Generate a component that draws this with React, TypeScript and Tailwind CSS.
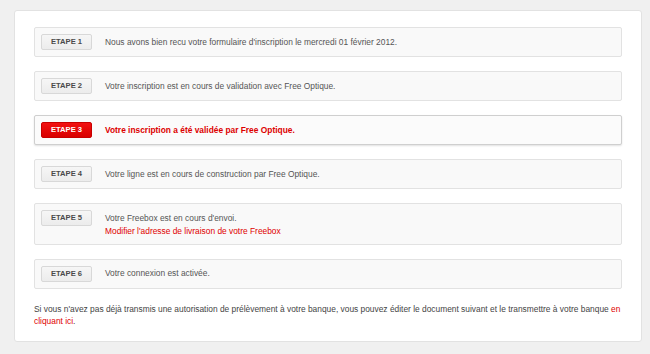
const steps = [
  { n: 1, text: "Nous avons bien recu votre formulaire d'inscription le mercredi 01 février 2012." },
  { n: 2, text: "Votre inscription est en cours de validation avec Free Optique." },
  { n: 3, text: "Votre inscription a été validée par Free Optique.", active: true },
  { n: 4, text: "Votre ligne est en cours de construction par Free Optique." },
  { n: 5, text: "Votre Freebox est en cours d'envoi.", link: "Modifier l'adresse de livraison de votre Freebox" },
  { n: 6, text: "Votre connexion est activée." },
];

export default function App() {
  return (
    <div
      className="w-[650px] h-[354px] bg-[#f0f0f0] pt-[10px] pl-[14px] overflow-hidden"
      style={{ fontFamily: '"Liberation Sans", Arial, Helvetica, sans-serif' }}
    >
      <div className="w-[628px] bg-white border border-[#e2e2e2] rounded-[3px] px-[19px] pt-[16px] pb-[14px]">
        <div className="flex flex-col gap-[14px]">
          {steps.map((s) => (
            <div
              key={s.n}
              className={
                s.active
                  ? "flex items-start px-[6px] py-[6px] bg-[#fbfbfb] border border-[#cfcfcf] rounded-[2px] shadow-[0_1px_2px_rgba(0,0,0,0.12)]"
                  : "flex items-start px-[6px] py-[6px] bg-[#f9f9f9] border border-[#e2e2e2] rounded-[2px]"
              }
            >
              <div
                className={
                  s.active
                    ? "w-[51px] h-[16px] shrink-0 flex items-center justify-center rounded-[2px] border border-[#c80000] bg-gradient-to-b from-[#f21111] to-[#d90000] text-white text-[7.6px] font-bold"
                    : "w-[51px] h-[16px] shrink-0 flex items-center justify-center rounded-[2px] border border-[#d8d8d8] bg-gradient-to-b from-[#f6f6f6] to-[#ececec] text-[#4a4a4a] text-[7.6px] font-bold"
                }
              >
                ETAPE {s.n}
              </div>
              <div className="ml-[13px] pt-[1.5px] text-[8.4px] leading-[13px]">
                <div className={s.active ? "text-[#dd0000] font-bold" : "text-[#555]"}>{s.text}</div>
                {s.link && <div className="text-[#e00000]">{s.link}</div>}
              </div>
            </div>
          ))}
        </div>
        <p className="mt-[14px] text-[8.4px] leading-[12px] text-[#444]">
          Si vous n'avez pas déjà transmis une autorisation de prélèvement à votre banque, vous pouvez éditer le
          document suivant et le transmettre à votre banque <span className="text-[#e00000]">en</span>{" "}
          <span className="text-[#e00000]">cliquant ici</span>.
        </p>
      </div>
    </div>
  );
}
